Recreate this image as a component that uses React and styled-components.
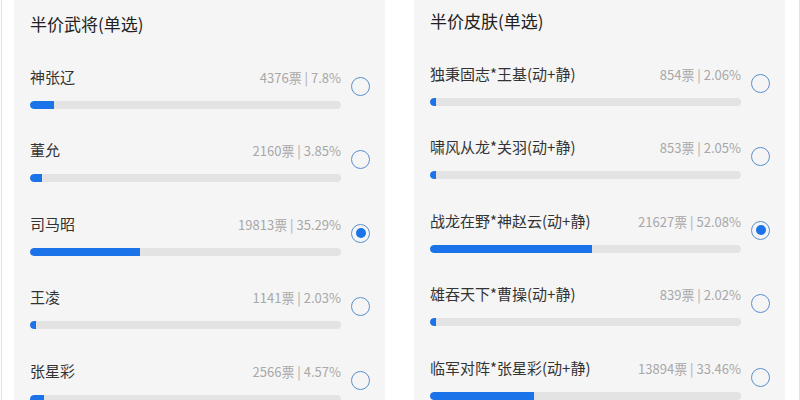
import styled, { createGlobalStyle } from "styled-components";

const GlobalStyle = createGlobalStyle`
  html, body {
    margin: 0;
    padding: 0;
    background: #ffffff;
  }
  body {
    font-family: "Noto Sans CJK SC", "Noto Sans", sans-serif;
  }
`;

const heroes = [
  { name: "神张辽", votes: 4376, pct: 7.8 },
  { name: "董允", votes: 2160, pct: 3.85 },
  { name: "司马昭", votes: 19813, pct: 35.29, checked: true },
  { name: "王凌", votes: 1141, pct: 2.03 },
  { name: "张星彩", votes: 2566, pct: 4.57 },
];

const skins = [
  { name: "独秉固志*王基(动+静)", votes: 854, pct: 2.06 },
  { name: "啸风从龙*关羽(动+静)", votes: 853, pct: 2.05 },
  { name: "战龙在野*神赵云(动+静)", votes: 21627, pct: 52.08, checked: true },
  { name: "雄吞天下*曹操(动+静)", votes: 839, pct: 2.02 },
  { name: "临军对阵*张星彩(动+静)", votes: 13894, pct: 33.46 },
];

const Poll = ({ title, options, top }) => (
  <Panel $top={top}>
    <Title>{title}</Title>
    {options.map((o) => (
      <Option key={o.name}>
        <Body>
          <Head>
            <Name>{o.name}</Name>
            <Stats>
              {o.votes}票 | {o.pct}%
            </Stats>
          </Head>
          <Track>
            <Fill style={{ width: `max(${o.pct}%, 6px)` }} />
          </Track>
        </Body>
        <Radio $checked={o.checked} />
      </Option>
    ))}
  </Panel>
);

const App = () => {
  return (
    <>
      <GlobalStyle />
      <Page>
        <Poll title="半价武将(单选)" options={heroes} top={12} />
        <Poll title="半价皮肤(单选)" options={skins} top={9} />
      </Page>
    </>
  );
};
export default App;

const Page = styled.div`
  height: 400px;
  box-sizing: border-box;
  border-left: 1px solid #e2e2e2;
  border-right: 1px solid #e2e2e2;
  margin-left: 1px;
  padding-left: 12px;
  display: flex;
  gap: 29px;
  overflow: hidden;
`;

const Panel = styled.div`
  width: 371px;
  flex-shrink: 0;
  box-sizing: border-box;
  background: #f5f5f5;
  padding: ${({ $top }) => $top}px 15px 0 16px;
`;

const Title = styled.div`
  font-size: 17px;
  line-height: 24px;
  font-weight: 400;
  color: #222;
  margin-bottom: 15px;
`;

const Option = styled.div`
  height: 73.5px;
  display: flex;
  align-items: center;
  gap: 10px;
`;

const Body = styled.div`
  width: 311px;
  display: flex;
  flex-direction: column;
  gap: 14px;
`;

const Head = styled.div`
  display: flex;
  justify-content: space-between;
  align-items: baseline;
  height: 20px;
`;

const Name = styled.span`
  font-size: 15px;
  line-height: 20px;
  color: #333;
`;

const Stats = styled.span`
  font-size: 13px;
  color: #a8a8a8;
`;

const Track = styled.div`
  height: 8px;
  border-radius: 4px;
  background: #e3e3e3;
  overflow: hidden;
`;

const Fill = styled.div`
  height: 100%;
  background: #1a73e8;
  border-radius: 4px 0 0 4px;
`;

const Radio = styled.span`
  width: 19px;
  height: 19px;
  box-sizing: border-box;
  border-radius: 50%;
  border: 1.5px solid #5a8fd2;
  margin-bottom: 3px;
  display: flex;
  align-items: center;
  justify-content: center;
  &::after {
    content: "";
    display: ${({ $checked }) => ($checked ? "block" : "none")};
    width: 10px;
    height: 10px;
    border-radius: 50%;
    background: #1a73e8;
  }
`;
